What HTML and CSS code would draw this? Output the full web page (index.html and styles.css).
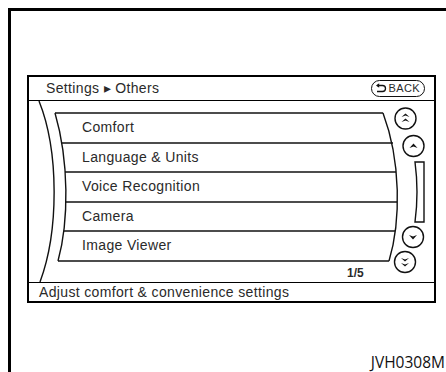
FILE: index.html
```html
<!DOCTYPE html>
<html lang="en">

<head>
    <meta charset="UTF-8">
    <meta name="viewport" content="width=device-width, initial-scale=1.0">
    <title>Settings - Others</title>
    <link rel="stylesheet" href="styles.css">
</head>

<body>
    <div class="frame">
        <!-- Navigation screen -->
        <div class="screen">
            <div class="head">
                <span class="title">Settings &#9656; Others</span>
                <span class="back">
                    <svg width="12" height="10" viewBox="0 0 12 10">
                        <path d="M2 2.5 H7.5 A3 3 0 0 1 7.5 8.5 H2" fill="none" stroke="#111" stroke-width="1.3"/>
                        <path d="M4.2 0.3 L1 2.5 L4.2 4.7 Z" fill="#111"/>
                    </svg>BACK</span>
            </div>

            <div class="body">
                <!-- bezel lines and scroll buttons -->
                <svg class="bezel" width="405" height="181" viewBox="0 0 405 181">
                    <g fill="none" stroke="#111" stroke-width="1.4">
                        <path d="M10 0 C30 50, 30 130, 11 181"/>
                        <path d="M26 12 C40 60, 40 120, 29 160"/>
                        <path d="M354 12 C372 60, 372 120, 360 160"/>
                        <path d="M26 12 H354"/>
                        <path d="M33 42 H364"/>
                        <path d="M36 71 H367"/>
                        <path d="M37 101 H368"/>
                        <path d="M35 130 H366"/>
                        <path d="M29 160 H360"/>

                        <circle cx="376.5" cy="17.5" r="10.5"/>
                        <circle cx="384.5" cy="45" r="10.5"/>
                        <circle cx="384" cy="136" r="10.5"/>
                        <circle cx="376" cy="161" r="10.5"/>

                        <path d="M386 61 H395 V121 H386 Q390 91 386 61 Z"/>
                    </g>
                    <g fill="#111">
                        <path d="M372.5 16 L376.5 12.5 L380.5 16 L376.5 14.5 Z"/>
                        <path d="M372.5 21 L376.5 17.5 L380.5 21 L376.5 19.5 Z"/>
                        <path d="M380.5 47 L384.5 42.5 L388.5 47 L384.5 45.5 Z"/>
                        <path d="M380 134 L384 138.5 L388 134 L384 135.5 Z"/>
                        <path d="M372 157 L376 160.5 L380 157 L376 158.5 Z"/>
                        <path d="M372 162 L376 165.5 L380 162 L376 163.5 Z"/>
                    </g>
                </svg>

                <ul class="list">
                    <li>Comfort</li>
                    <li>Language &amp; Units</li>
                    <li>Voice Recognition</li>
                    <li>Camera</li>
                    <li>Image Viewer</li>
                </ul>
                <div class="page">1/5</div>
            </div>

            <div class="foot">Adjust comfort &amp; convenience settings</div>
        </div>

        <div class="caption">JVH0308M</div>
    </div>
</body>

</html>
```

FILE: styles.css
```css
body {
    margin: 0;
    padding: 8px 0 0 8px;
    height: 372px;
    box-sizing: border-box;
    overflow: hidden;
    background-color: #fff;
    font-family: "Liberation Sans", Arial, sans-serif;
    color: #2a2a2a;
}

.frame {
    border-top: 3px solid #000;
    border-left: 3px solid #000;
    height: 364px;
    box-sizing: border-box;
    padding: 64px 0 0 16px;
    display: flex;
    flex-direction: column;
}

.screen {
    width: 409px;
    height: 228px;
    box-sizing: border-box;
    border: 2px solid #000;
    display: flex;
    flex-direction: column;
    letter-spacing: 0.35px;
}

.head {
    height: 24px;
    box-sizing: border-box;
    border-bottom: 1px solid #000;
    display: flex;
    align-items: center;
    justify-content: space-between;
    padding: 0 9px 1px 17px;
}

.title {
    font-size: 14px;
}

.back {
    display: flex;
    align-items: center;
    gap: 1px;
    height: 17px;
    box-sizing: border-box;
    padding: 0 4px 0 3px;
    border: 1px solid #111;
    border-radius: 9px;
    font-size: 11px;
    letter-spacing: 0.4px;
}

.body {
    position: relative;
    height: 181px;
}

.bezel {
    position: absolute;
    left: 0;
    top: 0;
}

.list {
    list-style: none;
    margin: 0;
    padding: 12px 0 0 53px;
}

.list li {
    height: 29.6px;
    line-height: 29.6px;
    font-size: 14px;
}

.page {
    margin: 5px 0 0 318px;
    font-size: 12px;
    font-weight: bold;
    letter-spacing: 0;
}

.foot {
    height: 19px;
    box-sizing: border-box;
    border-top: 1px solid #000;
    padding-left: 10px;
    font-size: 14px;
    line-height: 18px;
}

.caption {
    margin-top: auto;
    align-self: flex-end;
    font-family: "Open Sans", sans-serif;
    font-size: 15.5px;
    line-height: 20px;
    padding-right: 1px;
    color: #111;
}
```
